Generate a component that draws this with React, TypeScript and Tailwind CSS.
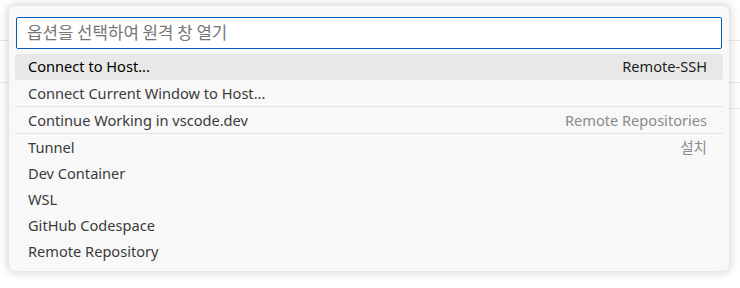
import React from "react";

type Item = { label: string; desc?: string; sep?: boolean; active?: boolean };

const items: Item[] = [
  { label: "Connect to Host...", desc: "Remote-SSH", active: true },
  { label: "Connect Current Window to Host..." },
  { label: "Continue Working in vscode.dev", desc: "Remote Repositories", sep: true },
  { label: "Tunnel", desc: "설치", sep: true },
  { label: "Dev Container" },
  { label: "WSL" },
  { label: "GitHub Codespace" },
  { label: "Remote Repository" },
];

function Row({ it }: { it: Item }) {
  return (
    <div
      className={
        "flex items-center justify-between pl-[13px] pr-[16px] text-[14.6px] " +
        (it.active ? "bg-[#e8e8e8] rounded-[3px] text-[#000000] " : "text-[#3b3b3b] pt-px ") +
        (it.sep ? "h-[27px] border-t border-[#e5e5e5]" : "h-[26px]")
      }
    >
      <span>{it.label}</span>
      {it.desc && (
        <span className={it.active ? "text-[#1f1f1f]" : "text-[#8b8b8b]"}>{it.desc}</span>
      )}
    </div>
  );
}

export default function App() {
  return (
    <div
      className="relative w-[740px] h-[288px] bg-white overflow-hidden pl-[9px] pt-[6px]"
      style={{ fontFamily: '"Noto Sans", "Noto Sans CJK KR", sans-serif' }}
    >
      {/* faint editor lines behind the widget */}
      <div className="absolute inset-x-0 top-[40px] h-px bg-[#e8e8e8]" />
      <div className="absolute inset-x-0 top-[82px] h-px bg-[#e8e8e8]" />
      <div className="absolute right-0 top-[108px] w-[20px] h-px bg-[#e8e8e8]" />

      <div className="relative w-[720px] h-[265px] rounded-[6px] bg-[#f8f8f8] shadow-[0_0_8px_2px_rgba(0,0,0,0.16)] px-[6px] pt-[11px]">
        <div className="mx-px h-[32px] border border-[#005fb8] rounded-[2px] bg-white flex items-center pl-[10px]">
          <span
            className="text-[16.8px] text-[#767676]"
            style={{ fontFamily: '"Noto Sans CJK KR", "Noto Sans", sans-serif' }}
          >
            옵션을 선택하여 원격 창 열기
          </span>
        </div>
        <div className="mt-[5px] flex flex-col">
          {items.map((it, i) => (
            <Row key={i} it={it} />
          ))}
        </div>
      </div>
    </div>
  );
}
